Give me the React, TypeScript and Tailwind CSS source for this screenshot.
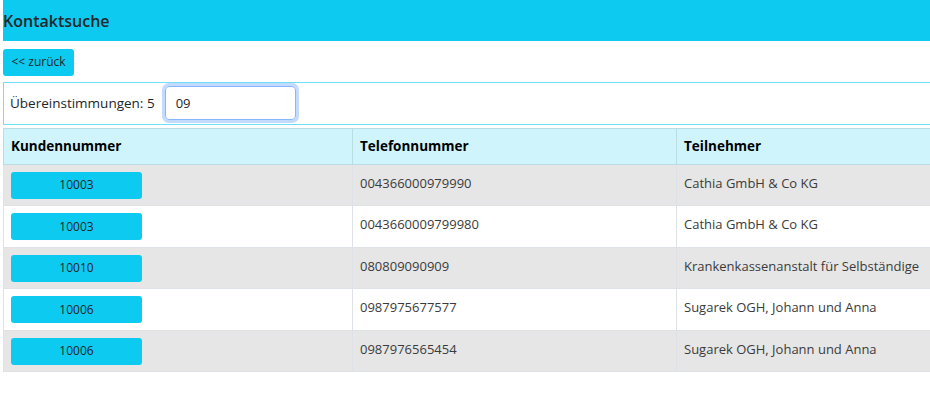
const rows = [
  { kunde: '10003', tel: '004366000979990', name: 'Cathia GmbH & Co KG' },
  { kunde: '10003', tel: '0043660009799980', name: 'Cathia GmbH & Co KG' },
  { kunde: '10010', tel: '080809090909', name: 'Krankenkassenanstalt für Selbständige' },
  { kunde: '10006', tel: '0987975677577', name: 'Sugarek OGH, Johann und Anna' },
  { kunde: '10006', tel: '0987976565454', name: 'Sugarek OGH, Johann und Anna' },
];

export default function App() {
  return (
    <div
      className="min-h-[413px] bg-white pl-[3px] text-[#212529]"
      style={{ fontFamily: '"Segoe UI", "Open Sans", sans-serif' }}
    >
      {/* Titel */}
      <div className="flex h-[41px] items-center bg-[#0dcaf0]">
        <h1 className="text-[16px] font-semibold text-[#212529]">Kontaktsuche</h1>
      </div>

      {/* Zurück */}
      <div className="pt-[7px]">
        <button className="h-[27px] w-[71px] rounded-[3px] bg-[#0dcaf0] text-[12px] text-[#212529]">
          &lt;&lt; zurück
        </button>
      </div>

      {/* Suche */}
      <div className="mt-[6px] flex h-[43px] items-center border border-r-0 border-[#6edff6] pl-[6px]">
        <span className="text-[13.5px]">Übereinstimmungen: 5</span>
        <input
          defaultValue="09"
          className="ml-[10px] h-[34px] w-[131px] rounded-[4px] border border-[#86b7fe] px-[10px] text-[13px] text-[#212529] shadow-[0_0_0_3px_rgba(13,110,253,0.25)] outline-none"
        />
      </div>

      {/* Tabelle */}
      <table className="mt-[3px] w-[927px] table-fixed border-collapse text-[13px]">
        <colgroup>
          <col className="w-[349px]" />
          <col className="w-[324px]" />
          <col />
        </colgroup>
        <thead>
          <tr className="h-[36px] bg-[#cff4fc]">
            <th className="border border-[#badce3] pl-[7px] text-left text-[13.5px] font-bold text-black">Kundennummer</th>
            <th className="border border-[#badce3] pl-[7px] text-left text-[13.5px] font-bold text-black">Telefonnummer</th>
            <th className="border border-[#badce3] border-r-0 pl-[7px] text-left text-[13.5px] font-bold text-black">Teilnehmer</th>
          </tr>
        </thead>
        <tbody>
          {rows.map((r, i) => (
            <tr key={i} className={`h-[41.5px] ${i % 2 === 0 ? 'bg-[#e6e6e6]' : 'bg-white'}`}>
              <td className="border border-[#dee2e6] px-[7px] pt-px">
                <button className="h-[27px] w-[131px] rounded-[3px] bg-[#0dcaf0] text-[12px] text-[#212529]">
                  {r.kunde}
                </button>
              </td>
              <td className="border border-[#dee2e6] pl-[7px] align-top pt-[9px] text-[#3b3b3b]">{r.tel}</td>
              <td className="border border-[#dee2e6] border-r-0 pl-[7px] align-top pt-[9px] text-[#3b3b3b] whitespace-nowrap">
                {r.name}
              </td>
            </tr>
          ))}
        </tbody>
      </table>
    </div>
  );
}
